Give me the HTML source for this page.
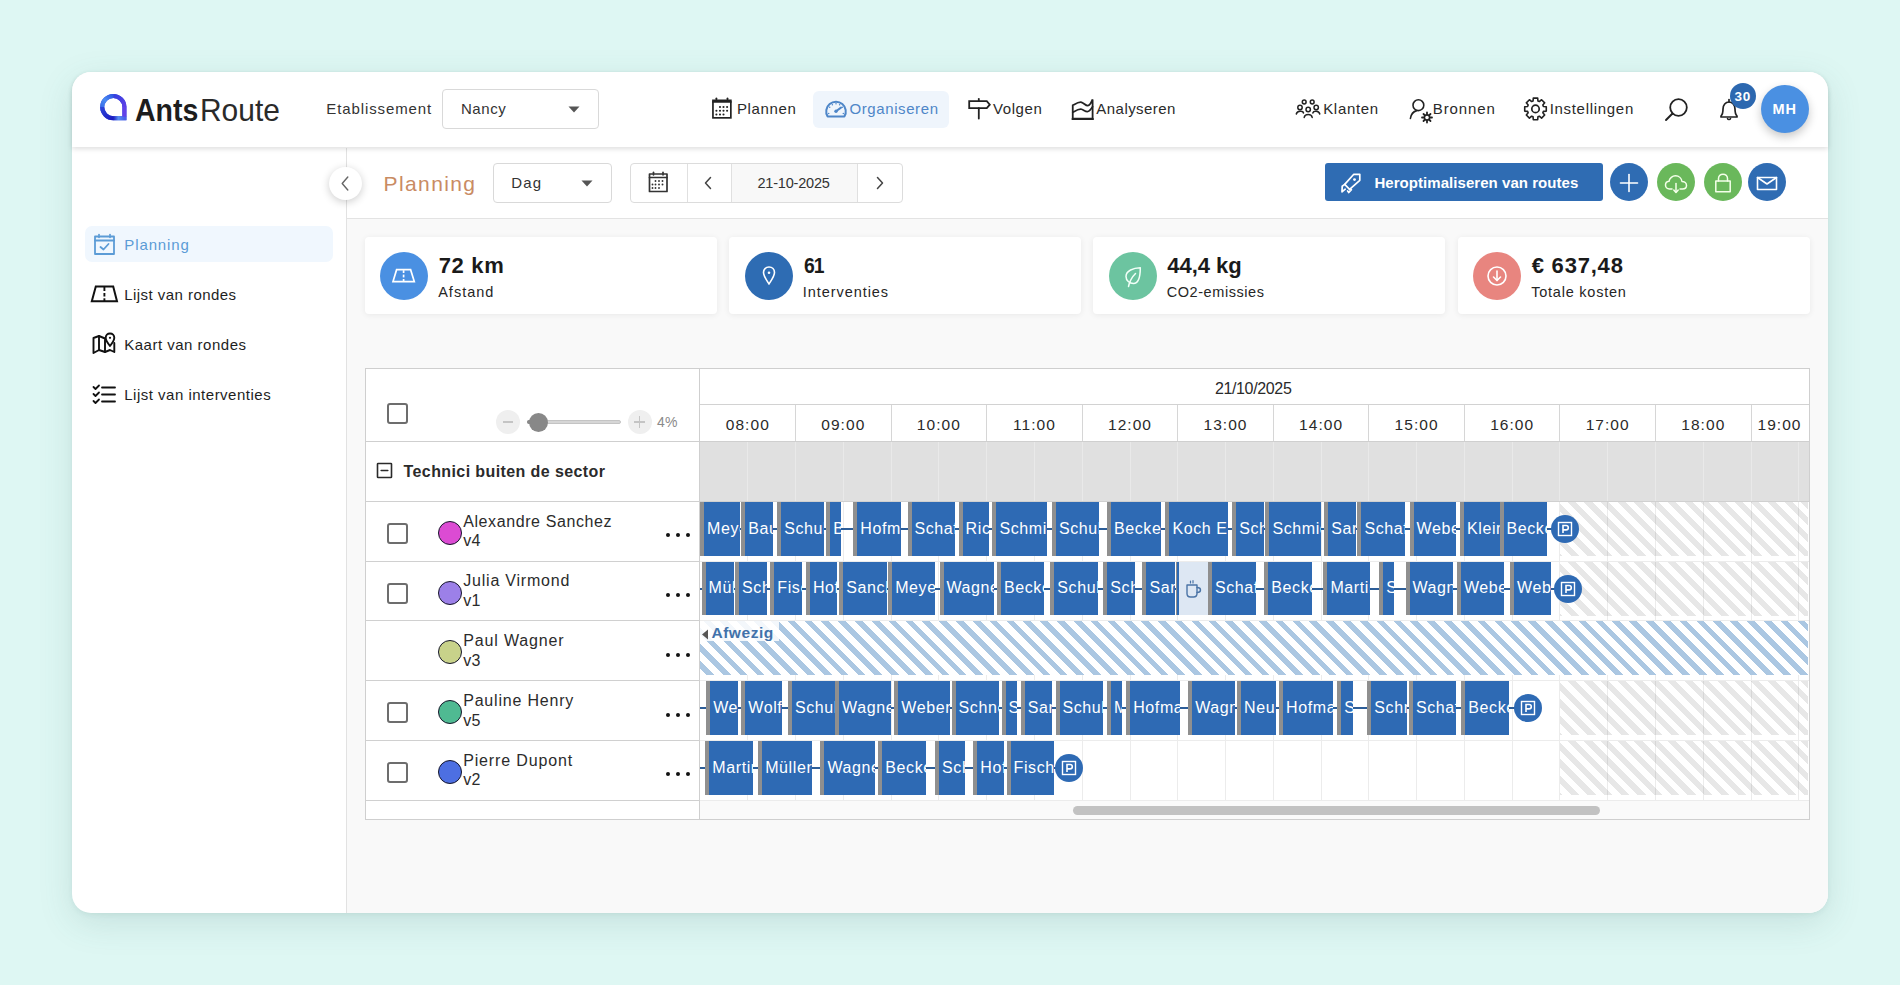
<!DOCTYPE html><html><head><meta charset="utf-8"><style>
html,body{margin:0;padding:0;}
body{width:1900px;height:985px;position:relative;overflow:hidden;background:#def7f3;font-family:"Liberation Sans",sans-serif;}
.t{position:absolute;white-space:pre;}
.b{position:absolute;box-sizing:border-box;}
</style></head><body>
<div class="b" style="left:72px;top:72px;width:1756px;height:841px;background:#fff;border-radius:19px;box-shadow:0 10px 34px rgba(60,110,105,0.15),0 2px 5px rgba(60,110,105,0.08);"></div>
<div class="b" style="left:347px;top:148px;width:1481px;height:765px;background:#f9f9f9;border-bottom-right-radius:19px;"></div>
<div class="b" style="left:346px;top:148px;width:1px;height:765px;background:#e2e2e2;"></div>
<div class="b" style="left:347px;top:148px;width:1481px;height:71px;background:#fff;border-bottom:1px solid #e3e3e3;"></div>
<div class="b" style="left:72px;top:72px;width:1756px;height:75px;background:#fff;border-radius:19px 19px 0 0;box-shadow:0 2px 5px rgba(0,0,0,0.13);"></div>
<svg class="b" style="left:97px;top:91px;" width="34" height="34" viewBox="0 0 34 34" fill="none" stroke-linecap="round" stroke-linejoin="round"><defs>
<linearGradient id="gA" gradientUnits="userSpaceOnUse" x1="16.3" y1="5" x2="27.4" y2="16.1"><stop offset="0" stop-color="#3540de"/><stop offset="1" stop-color="#5e40e6"/></linearGradient>
<linearGradient id="gB" gradientUnits="userSpaceOnUse" x1="16.3" y1="5" x2="5.2" y2="16.1"><stop offset="0" stop-color="#2f58e2"/><stop offset="0.55" stop-color="#4a8cf2"/><stop offset="1" stop-color="#3a70ea"/></linearGradient>
<linearGradient id="gC" gradientUnits="userSpaceOnUse" x1="5.2" y1="16.1" x2="16.3" y2="27.2"><stop offset="0" stop-color="#2c44d8"/><stop offset="1" stop-color="#1c1cc0"/></linearGradient>
<linearGradient id="gD" gradientUnits="userSpaceOnUse" x1="16.3" y1="27.2" x2="27.4" y2="27.2"><stop offset="0" stop-color="#1c1cc0"/><stop offset="0.45" stop-color="#5590f2"/><stop offset="1" stop-color="#4a62ea"/></linearGradient>
</defs>
<g stroke-width="4.1" stroke-linecap="butt" fill="none">
<path d="M27.4 16.1 A11.1 11.1 0 1 0 16.3 27.2 L27.4 27.2 Z" stroke="#3a50e2" stroke-linejoin="miter"/>
<path d="M27.4 16.1 A11.1 11.1 0 0 0 16.3 5" stroke="url(#gA)"/>
<path d="M16.3 5 A11.1 11.1 0 0 0 5.2 16.1" stroke="url(#gB)"/>
<path d="M5.2 16.1 A11.1 11.1 0 0 0 16.3 27.2" stroke="url(#gC)"/>
<path d="M16.1 27.2 L29.45 27.2" stroke="url(#gD)"/>
<path d="M27.4 25.6 L27.4 15.8" stroke="#6242e8"/>
</g></svg>
<div class="t" style="left:135.00px;top:91.19px;font-size:31.5px;line-height:39px;font-weight:700;color:#1d1d1d;letter-spacing:0px;transform:scaleX(0.905);transform-origin:0 0;">Ants</div>
<div class="t" style="left:199.50px;top:91.19px;font-size:31.5px;line-height:39px;font-weight:400;color:#2a2a2a;letter-spacing:0px;transform:scaleX(0.95);transform-origin:0 0;">Route</div>
<div class="t" style="left:326.25px;top:99.30px;font-size:15px;line-height:19px;font-weight:400;color:#333;letter-spacing:0.9px;">Etablissement</div>
<div class="b" style="left:442px;top:89px;width:157px;height:40px;border:1px solid #d9d9d9;border-radius:4px;background:#fff;"></div>
<div class="t" style="left:460.95px;top:99.30px;font-size:15px;line-height:19px;font-weight:400;color:#333;letter-spacing:0.6px;">Nancy</div>
<svg class="b" style="left:568px;top:106px;" width="12" height="7" viewBox="0 0 12 7" fill="none" stroke-linecap="round" stroke-linejoin="round"><path d="M0.5 0.5 L11.5 0.5 L6 6.5 Z" fill="#555" stroke="none"/></svg>
<svg class="b" style="left:711px;top:97px;" width="22" height="23" viewBox="0 0 22 23" fill="none" stroke-linecap="round" stroke-linejoin="round"><rect x="1.95" y="3.35" width="17.9" height="17.5" stroke="#222" stroke-width="1.7" stroke-linejoin="miter"/><line x1="1.95" y1="4.9" x2="19.85" y2="4.9" stroke="#222" stroke-width="1.7"/>
<line x1="5.4" y1="1.3" x2="5.4" y2="4" stroke="#222" stroke-width="1.7"/><line x1="16.5" y1="1.3" x2="16.5" y2="4" stroke="#222" stroke-width="1.7"/>
<g fill="#222" stroke="none"><circle cx="9" cy="10" r="1.05"/><circle cx="12.5" cy="10" r="1.05"/><circle cx="16.1" cy="10" r="1.05"/>
<circle cx="5.4" cy="13.7" r="1.05"/><circle cx="9" cy="13.7" r="1.05"/><circle cx="12.5" cy="13.7" r="1.05"/><circle cx="16.1" cy="13.7" r="1.05"/>
<circle cx="5.4" cy="17.5" r="1.05"/><circle cx="9" cy="17.5" r="1.05"/><circle cx="12.5" cy="17.5" r="1.05"/></g></svg>
<div class="t" style="left:736.95px;top:99.10px;font-size:15px;line-height:19px;font-weight:400;color:#2a2a2a;letter-spacing:0.65px;">Plannen</div>
<div class="b" style="left:812.5px;top:91px;width:136.0px;height:37px;background:#eff5fc;border-radius:6px;"></div>
<svg class="b" style="left:824px;top:99px;" width="24" height="20" viewBox="0 0 24 20" fill="none" stroke-linecap="round" stroke-linejoin="round"><path d="M3.6 17.6 A9.8 9.8 0 1 1 20.4 17.6 Z" stroke="#4e86c8" stroke-width="2" stroke-linejoin="round"/>
<line x1="12" y1="12.2" x2="17" y2="8.6" stroke="#4e86c8" stroke-width="2"/><circle cx="12" cy="12.2" r="1.7" fill="#4e86c8" stroke="none"/>
<g fill="#4e86c8" stroke="none"><circle cx="4.70" cy="14.50" r="0.75"/><circle cx="5.68" cy="8.35" r="0.75"/><circle cx="8.35" cy="5.68" r="0.75"/><circle cx="12.00" cy="4.70" r="0.75"/><circle cx="15.65" cy="5.68" r="0.75"/><circle cx="18.32" cy="8.35" r="0.75"/><circle cx="19.30" cy="14.50" r="0.75"/></g></svg>
<div class="t" style="left:849.45px;top:99.10px;font-size:15px;line-height:19px;font-weight:400;color:#4e86c8;letter-spacing:0.6px;">Organiseren</div>
<svg class="b" style="left:967px;top:97px;" width="25" height="23" viewBox="0 0 25 23" fill="none" stroke-linecap="round" stroke-linejoin="round"><path d="M2.2 4.2 L19.8 4.2 L22.8 7.7 L19.8 11.2 L2.2 11.2 Z" stroke="#222" stroke-width="1.8" stroke-linejoin="miter"/>
<line x1="11.8" y1="1.8" x2="11.8" y2="4.2" stroke="#222" stroke-width="1.8"/><line x1="11.8" y1="11.2" x2="11.8" y2="21.5" stroke="#222" stroke-width="1.8"/></svg>
<div class="t" style="left:992.95px;top:99.10px;font-size:15px;line-height:19px;font-weight:400;color:#2a2a2a;letter-spacing:0.6px;">Volgen</div>
<svg class="b" style="left:1071px;top:98px;" width="24" height="23" viewBox="0 0 24 23" fill="none" stroke-linecap="round" stroke-linejoin="round"><path d="M1.75 21.2 L1.75 7.3 C5 5.5 8 3.5 10.6 4.3 C13 5 14.5 7.8 16.9 7.6 C19 7.4 20.5 4 21.6 1.4 L21.6 21.2 Z" stroke="#222" stroke-width="1.8" stroke-linejoin="miter"/>
<path d="M1.75 14.3 C5 12.5 8 10.5 10.6 11.3 C13 12 14.5 14 16.9 13.5 C19 13 20.5 10.5 21.6 8.7" stroke="#222" stroke-width="1.7"/>
<line x1="1.75" y1="20.9" x2="21.6" y2="20.9" stroke="#222" stroke-width="2.4"/></svg>
<div class="t" style="left:1096.35px;top:99.10px;font-size:15px;line-height:19px;font-weight:400;color:#2a2a2a;letter-spacing:0.45px;">Analyseren</div>
<svg class="b" style="left:1295px;top:99px;" width="28" height="20" viewBox="0 0 28 20" fill="none" stroke-linecap="round" stroke-linejoin="round"><g stroke="#222" stroke-width="1.5">
<circle cx="9.2" cy="3" r="1.9"/><circle cx="17.2" cy="3" r="1.9"/>
<circle cx="5" cy="8.5" r="2.2"/><circle cx="13.2" cy="10.5" r="2.2"/><circle cx="21.2" cy="8.5" r="2.2"/>
<path d="M1.3 15 C2 11.5 8 11.5 8.5 14"/><path d="M17.8 14 C18.5 11.5 24 11.5 24.8 15"/>
<path d="M9.2 18.5 C9.8 14.5 16.6 14.5 17.2 18.5"/></g></svg>
<div class="t" style="left:1323.15px;top:99.10px;font-size:15px;line-height:19px;font-weight:400;color:#2a2a2a;letter-spacing:0.7px;">Klanten</div>
<svg class="b" style="left:1408px;top:98px;" width="27" height="27" viewBox="0 0 27 27" fill="none" stroke-linecap="round" stroke-linejoin="round"><g stroke="#222" stroke-width="1.6">
<circle cx="10.4" cy="7.2" r="5.4"/><path d="M2.4 20.5 C3 16.5 5 13.5 8.8 12.6"/>
<circle cx="19" cy="19.5" r="2.6"/></g>
<g stroke="#222" stroke-width="1.8">
<line x1="19" y1="14.5" x2="19" y2="16"/><line x1="19" y1="23" x2="19" y2="24.5"/>
<line x1="14" y1="19.5" x2="15.5" y2="19.5"/><line x1="22.5" y1="19.5" x2="24" y2="19.5"/>
<line x1="15.5" y1="16" x2="16.5" y2="17"/><line x1="21.5" y1="22" x2="22.5" y2="23"/>
<line x1="22.5" y1="16" x2="21.5" y2="17"/><line x1="16.5" y1="22" x2="15.5" y2="23"/></g></svg>
<div class="t" style="left:1432.75px;top:99.10px;font-size:15px;line-height:19px;font-weight:400;color:#2a2a2a;letter-spacing:0.9px;">Bronnen</div>
<svg class="b" style="left:1523px;top:96px;" width="26" height="26" viewBox="0 0 26 26" fill="none" stroke-linecap="round" stroke-linejoin="round"><path d="M10.05 4.97 L10.31 2.12 L14.69 2.12 L14.95 4.97 L16.37 5.56 L18.58 3.73 L21.67 6.82 L19.84 9.03 L20.43 10.45 L23.28 10.71 L23.28 15.09 L20.43 15.35 L19.84 16.77 L21.67 18.98 L18.58 22.07 L16.37 20.24 L14.95 20.83 L14.69 23.68 L10.31 23.68 L10.05 20.83 L8.63 20.24 L6.42 22.07 L3.33 18.98 L5.16 16.77 L4.57 15.35 L1.72 15.09 L1.72 10.71 L4.57 10.45 L5.16 9.03 L3.33 6.82 L6.42 3.73 L8.63 5.56 Z" stroke="#222" stroke-width="1.6" stroke-linejoin="round"/><circle cx="12.5" cy="12.9" r="3.7" stroke="#222" stroke-width="1.7"/></svg>
<div class="t" style="left:1549.65px;top:99.10px;font-size:15px;line-height:19px;font-weight:400;color:#2a2a2a;letter-spacing:0.7px;">Instellingen</div>
<svg class="b" style="left:1664px;top:97px;" width="26" height="26" viewBox="0 0 26 26" fill="none" stroke-linecap="round" stroke-linejoin="round"><circle cx="14.5" cy="10.5" r="8.3" stroke="#222" stroke-width="1.8"/><line x1="8.5" y1="16.5" x2="2" y2="23" stroke="#222" stroke-width="1.9"/></svg>
<svg class="b" style="left:1718px;top:97px;" width="22" height="26" viewBox="0 0 22 26" fill="none" stroke-linecap="round" stroke-linejoin="round"><path d="M3 20 L3 19 C4.5 17.5 5 15 5 12 C5 8 7.5 5 11 5 C14.5 5 17 8 17 12 C17 15 17.5 17.5 19 19 L19 20 Z" stroke="#222" stroke-width="1.7"/>
<line x1="11" y1="2.5" x2="11" y2="5" stroke="#222" stroke-width="1.7"/><path d="M9.5 21.5 A1.6 1.6 0 0 0 12.5 21.5" stroke="#222" stroke-width="1.6"/></svg>
<div class="b" style="left:1730px;top:83px;width:26px;height:26px;background:#2c68b0;border-radius:50%;"></div>
<div class="t" style="left:1734.56px;top:87.82px;font-size:13.5px;line-height:17px;font-weight:700;color:#fff;letter-spacing:0.6px;">30</div>
<div class="b" style="left:1761px;top:85px;width:48px;height:48px;background:#4a90e2;border-radius:50%;box-shadow:0 4px 10px rgba(0,0,0,0.22);"></div>
<div class="t" style="left:1772.48px;top:100.48px;font-size:14.5px;line-height:18px;font-weight:700;color:#fff;letter-spacing:1.0px;">MH</div>
<div class="b" style="left:329px;top:167px;width:33px;height:33px;background:#fff;border-radius:50%;box-shadow:0 2px 9px rgba(0,0,0,0.20);"></div>
<svg class="b" style="left:339px;top:175px;" width="12" height="17" viewBox="0 0 12 17" fill="none" stroke-linecap="round" stroke-linejoin="round"><path d="M8.8 2 L3.2 8.5 L8.8 15" stroke="#666" stroke-width="1.4"/></svg>
<div class="t" style="left:383.53px;top:170.62px;font-size:21px;line-height:26px;font-weight:400;color:#c98b63;letter-spacing:1.4px;">Planning</div>
<div class="b" style="left:493px;top:163px;width:119px;height:40px;border:1px solid #d9d9d9;border-radius:4px;background:#fff;"></div>
<div class="t" style="left:511.25px;top:172.90px;font-size:15px;line-height:19px;font-weight:400;color:#333;letter-spacing:1.2px;">Dag</div>
<svg class="b" style="left:581px;top:180px;" width="12" height="7" viewBox="0 0 12 7" fill="none" stroke-linecap="round" stroke-linejoin="round"><path d="M0.5 0.5 L11.5 0.5 L6 6.5 Z" fill="#555" stroke="none"/></svg>
<div class="b" style="left:630px;top:163px;width:273px;height:40px;border:1px solid #dcdcdc;border-radius:4px;background:#fff;"></div>
<div class="b" style="left:732px;top:164px;width:126px;height:38px;background:#f8f8f8;"></div>
<div class="b" style="left:687px;top:164px;width:1px;height:38px;background:#e0e0e0;"></div>
<div class="b" style="left:731px;top:164px;width:1px;height:38px;background:#e0e0e0;"></div>
<div class="b" style="left:857px;top:164px;width:1px;height:38px;background:#e0e0e0;"></div>
<svg class="b" style="left:648px;top:171px;" width="21" height="22" viewBox="0 0 21 22" fill="none" stroke-linecap="round" stroke-linejoin="round"><rect x="1.5" y="3" width="17.5" height="17.5" stroke="#333" stroke-width="1.7"/><line x1="1.5" y1="6.5" x2="19" y2="6.5" stroke="#333" stroke-width="1.7"/>
<line x1="5.5" y1="1.2" x2="5.5" y2="4" stroke="#333" stroke-width="1.6"/><line x1="15" y1="1.2" x2="15" y2="4" stroke="#333" stroke-width="1.6"/>
<g fill="#333" stroke="none"><circle cx="7.5" cy="10" r="0.95"/><circle cx="11" cy="10" r="0.95"/><circle cx="14.5" cy="10" r="0.95"/>
<circle cx="4.5" cy="13.5" r="0.95"/><circle cx="7.5" cy="13.5" r="0.95"/><circle cx="11" cy="13.5" r="0.95"/><circle cx="14.5" cy="13.5" r="0.95"/>
<circle cx="4.5" cy="17" r="0.95"/><circle cx="7.5" cy="17" r="0.95"/><circle cx="11" cy="17" r="0.95"/></g></svg>
<svg class="b" style="left:703px;top:176px;" width="10" height="14" viewBox="0 0 10 14" fill="none" stroke-linecap="round" stroke-linejoin="round"><path d="M7.5 1.5 L2.5 7 L7.5 12.5" stroke="#444" stroke-width="1.5"/></svg>
<div class="t" style="left:757.49px;top:173.88px;font-size:14.5px;line-height:18px;font-weight:400;color:#333;letter-spacing:-0.2px;">21-10-2025</div>
<svg class="b" style="left:875px;top:176px;" width="10" height="14" viewBox="0 0 10 14" fill="none" stroke-linecap="round" stroke-linejoin="round"><path d="M2.5 1.5 L7.5 7 L2.5 12.5" stroke="#444" stroke-width="1.5"/></svg>
<div class="b" style="left:1325px;top:163px;width:278px;height:38px;background:#2f6cb3;border-radius:3px;"></div>
<svg class="b" style="left:1339px;top:172px;" width="23" height="23" viewBox="0 0 23 23" fill="none" stroke-linecap="round" stroke-linejoin="round"><g stroke="#fff" stroke-width="1.7" stroke-linejoin="round">
<path d="M20.8 2.3 L20.8 8.3 L10.6 17.3 L5.7 12.4 L14.8 2.3 Z"/>
<path d="M5.7 12.4 L3.2 14.2 L3 19.8 L6.2 17.2"/><path d="M10.6 17.3 L12.4 17.6 L9.8 20.5 L8.6 19"/></g>
<circle cx="15.5" cy="7.6" r="1.4" fill="#fff" stroke="none"/></svg>
<div class="t" style="left:1374.45px;top:172.70px;font-size:15px;line-height:19px;font-weight:700;color:#fff;letter-spacing:0.05px;">Heroptimaliseren van routes</div>
<div class="b" style="left:1610px;top:163px;width:38px;height:38px;background:#2f6cb3;border-radius:50%;"></div>
<svg class="b" style="left:1619px;top:172.7px;" width="20" height="20" viewBox="0 0 20 20" fill="none" stroke-linecap="round" stroke-linejoin="round"><line x1="10" y1="1.5" x2="10" y2="18.5" stroke="#fff" stroke-width="1.6"/><line x1="1.5" y1="10" x2="18.5" y2="10" stroke="#fff" stroke-width="1.6"/></svg>
<div class="b" style="left:1657px;top:163px;width:38px;height:38px;background:#6ab85b;border-radius:50%;"></div>
<svg class="b" style="left:1664px;top:174px;" width="24" height="20" viewBox="0 0 24 20" fill="none" stroke-linecap="round" stroke-linejoin="round"><path d="M8 15 L5.5 15 C3 15 1.5 13 1.5 11 C1.5 9 3 7.5 5 7.3 C5.5 4 8.5 1.8 11.5 1.8 C15 1.8 17.5 4.5 18 7.5 C20.5 7.5 22.5 9.3 22.5 11.5 C22.5 13.5 21 15 18.5 15 L16 15" stroke="#f4ffe9" stroke-width="1.5"/>
<line x1="12" y1="9.5" x2="12" y2="18" stroke="#f4ffe9" stroke-width="1.5"/><path d="M9.8 16 L12 18.5 L14.2 16" stroke="#f4ffe9" stroke-width="1.5"/></svg>
<div class="b" style="left:1704px;top:163px;width:38px;height:38px;background:#6ab85b;border-radius:50%;"></div>
<svg class="b" style="left:1714px;top:172.5px;" width="18" height="20" viewBox="0 0 18 20" fill="none" stroke-linecap="round" stroke-linejoin="round"><rect x="1.8" y="8" width="14.4" height="10.8" stroke="#f4ffe9" stroke-width="1.5"/><path d="M4.5 8 L4.5 5.5 C4.5 3 6.5 1.2 9 1.2 C11.5 1.2 13.5 3 13.5 5.5 L13.5 8" stroke="#f4ffe9" stroke-width="1.5"/></svg>
<div class="b" style="left:1748px;top:163px;width:38px;height:38px;background:#2f6cb3;border-radius:50%;"></div>
<svg class="b" style="left:1756px;top:175.8px;" width="22" height="15" viewBox="0 0 22 15" fill="none" stroke-linecap="round" stroke-linejoin="round"><rect x="1.5" y="1.5" width="19" height="12" stroke="#fff" stroke-width="1.6"/><path d="M1.5 1.5 L11 8 L20.5 1.5" stroke="#fff" stroke-width="1.6"/></svg>
<div class="b" style="left:85px;top:226px;width:248px;height:36px;background:#f0f7fe;border-radius:7px;"></div>
<svg class="b" style="left:93px;top:233px;" width="23" height="23" viewBox="0 0 23 23" fill="none" stroke-linecap="round" stroke-linejoin="round"><rect x="2" y="3.5" width="19" height="17.5" stroke="#5b9bd6" stroke-width="1.8"/><line x1="2" y1="7.5" x2="21" y2="7.5" stroke="#5b9bd6" stroke-width="1.8"/>
<line x1="6" y1="1.5" x2="6" y2="4.5" stroke="#5b9bd6" stroke-width="1.6"/><line x1="17" y1="1.5" x2="17" y2="4.5" stroke="#5b9bd6" stroke-width="1.6"/>
<path d="M7.5 14 L10.5 16.5 L15.5 11" stroke="#5b9bd6" stroke-width="1.8"/></svg>
<div class="t" style="left:124.25px;top:234.80px;font-size:15px;line-height:19px;font-weight:400;color:#5b9bd6;letter-spacing:0.9px;">Planning</div>
<svg class="b" style="left:89.5px;top:285px;" width="29" height="19" viewBox="0 0 29 19" fill="none" stroke-linecap="round" stroke-linejoin="round"><path d="M5.8 1.5 L23.2 1.5 L27 16.2 L1.8 16.2 Z" stroke="#111" stroke-width="2" stroke-linejoin="miter"/><g stroke="#111" stroke-width="1.9" stroke-linecap="butt"><line x1="14.4" y1="2" x2="14.4" y2="6"/><line x1="14.4" y1="8" x2="14.4" y2="11.5"/><line x1="14.4" y1="13.3" x2="14.4" y2="16"/></g></svg>
<div class="t" style="left:124.25px;top:284.50px;font-size:15px;line-height:19px;font-weight:400;color:#1e1e1e;letter-spacing:0.45px;">Lijst van rondes</div>
<svg class="b" style="left:91px;top:331px;" width="26" height="25" viewBox="0 0 26 25" fill="none" stroke-linecap="round" stroke-linejoin="round"><path d="M2.5 7 L8 5 L14 7.5 L14 21 L8 19 L2.5 22 Z" stroke="#111" stroke-width="1.9"/><line x1="8" y1="5" x2="8" y2="19" stroke="#111" stroke-width="1.9"/>
<path d="M19 2.5 C21.5 2.5 23.3 4.3 23.3 6.8 C23.3 9.5 21 12.5 19 15 C17 12.5 14.7 9.5 14.7 6.8 C14.7 4.3 16.5 2.5 19 2.5 Z" stroke="#111" stroke-width="1.9"/>
<circle cx="19" cy="6.8" r="1.1" fill="#111" stroke="none"/><path d="M14 21 L19 19 L23.3 21 L23.3 12" stroke="#111" stroke-width="1.9"/></svg>
<div class="t" style="left:124.25px;top:334.70px;font-size:15px;line-height:19px;font-weight:400;color:#1e1e1e;letter-spacing:0.5px;">Kaart van rondes</div>
<svg class="b" style="left:92px;top:384px;" width="25" height="21" viewBox="0 0 25 21" fill="none" stroke-linecap="round" stroke-linejoin="round"><g stroke="#111" stroke-width="1.8">
<path d="M1.5 3 L3.5 5 L7 1.5"/><path d="M1.5 10 L3.5 12 L7 8.5"/><path d="M1.5 17 L3.5 19 L7 15.5"/>
<line x1="10" y1="3.5" x2="23" y2="3.5"/><line x1="10" y1="10.5" x2="23" y2="10.5"/><line x1="10" y1="17.5" x2="23" y2="17.5"/></g></svg>
<div class="t" style="left:124.25px;top:385.00px;font-size:15px;line-height:19px;font-weight:400;color:#1e1e1e;letter-spacing:0.5px;">Lijst van interventies</div>
<div class="b" style="left:364.5px;top:236.5px;width:352.0px;height:77.5px;background:#fff;border-radius:4px;box-shadow:0 1px 6px rgba(0,0,0,0.07);"></div>
<div class="b" style="left:380.0px;top:252px;width:48.0px;height:48px;background:#4a90e2;border-radius:50%;"></div>
<svg class="b" style="left:390.0px;top:264px;" width="28" height="24" viewBox="0 0 28 24" fill="none" stroke-linecap="round" stroke-linejoin="round"><path d="M6.6 5.65 L20.6 5.65 L24.3 17.55 L3 17.55 Z" stroke="#fff" stroke-width="1.7" stroke-linejoin="miter"/><g stroke="#fff" stroke-width="1.7" stroke-linecap="butt"><line x1="13.6" y1="6.2" x2="13.6" y2="9"/><line x1="13.6" y1="10.6" x2="13.6" y2="13.4"/><line x1="13.6" y1="15" x2="13.6" y2="17.3"/></g></svg>
<div class="t" style="left:438.66px;top:251.98px;font-size:22px;line-height:28px;font-weight:700;color:#1a1a1a;letter-spacing:0.7px;">72 km</div>
<div class="t" style="left:438.19px;top:282.58px;font-size:14.5px;line-height:18px;font-weight:400;color:#262626;letter-spacing:1.0px;">Afstand</div>
<div class="b" style="left:729px;top:236.5px;width:352px;height:77.5px;background:#fff;border-radius:4px;box-shadow:0 1px 6px rgba(0,0,0,0.07);"></div>
<div class="b" style="left:744.5px;top:252px;width:48.0px;height:48px;background:#2e6cb3;border-radius:50%;"></div>
<svg class="b" style="left:756.5px;top:264px;" width="24" height="24" viewBox="0 0 24 24" fill="none" stroke-linecap="round" stroke-linejoin="round"><path d="M12 3 C15.3 3 17.5 5.4 17.5 8.5 C17.5 12 14.5 16 12 20 C9.5 16 6.5 12 6.5 8.5 C6.5 5.4 8.7 3 12 3 Z" stroke="#fff" stroke-width="1.6"/><circle cx="12" cy="8.8" r="1.3" fill="#fff" stroke="none"/></svg>
<div class="t" style="left:804.00px;top:251.98px;font-size:22px;line-height:28px;font-weight:700;color:#1a1a1a;letter-spacing:-1.2px;transform:scaleX(0.88);transform-origin:0 0;">61</div>
<div class="t" style="left:802.69px;top:282.58px;font-size:14.5px;line-height:18px;font-weight:400;color:#262626;letter-spacing:0.95px;">Interventies</div>
<div class="b" style="left:1093px;top:236.5px;width:352px;height:77.5px;background:#fff;border-radius:4px;box-shadow:0 1px 6px rgba(0,0,0,0.07);"></div>
<div class="b" style="left:1108.5px;top:252px;width:48.0px;height:48px;background:#6cc4a0;border-radius:50%;"></div>
<svg class="b" style="left:1120.5px;top:264px;" width="24" height="24" viewBox="0 0 24 24" fill="none" stroke-linecap="round" stroke-linejoin="round"><path d="M19.3 3.8 C12.5 4 5 6.5 5 12.5 C5 16.5 8.5 19.5 12.5 19.5 C17 19.5 19.3 15 19.3 3.8 Z" stroke="#f2fff8" stroke-width="1.5"/><path d="M7.5 22.5 C8.5 17.5 10.5 13.5 14.5 9.5" stroke="#f2fff8" stroke-width="1.5"/></svg>
<div class="t" style="left:1167.16px;top:251.98px;font-size:22px;line-height:28px;font-weight:700;color:#1a1a1a;letter-spacing:0.0px;">44,4 kg</div>
<div class="t" style="left:1166.68px;top:282.58px;font-size:14.5px;line-height:18px;font-weight:400;color:#262626;letter-spacing:0.57px;">CO2-emissies</div>
<div class="b" style="left:1457.5px;top:236.5px;width:352.0px;height:77.5px;background:#fff;border-radius:4px;box-shadow:0 1px 6px rgba(0,0,0,0.07);"></div>
<div class="b" style="left:1473.0px;top:252px;width:48.0px;height:48px;background:#e8857f;border-radius:50%;"></div>
<svg class="b" style="left:1485.0px;top:264px;" width="24" height="24" viewBox="0 0 24 24" fill="none" stroke-linecap="round" stroke-linejoin="round"><circle cx="12" cy="12" r="9" stroke="#fff" stroke-width="1.6"/><line x1="12" y1="7" x2="12" y2="16.5" stroke="#fff" stroke-width="1.6"/><path d="M8.5 13 L12 16.5 L15.5 13" stroke="#fff" stroke-width="1.6"/></svg>
<div class="t" style="left:1531.66px;top:251.98px;font-size:22px;line-height:28px;font-weight:700;color:#1a1a1a;letter-spacing:0.8px;">€ 637,48</div>
<div class="t" style="left:1531.18px;top:282.58px;font-size:14.5px;line-height:18px;font-weight:400;color:#262626;letter-spacing:0.77px;">Totale kosten</div>
<div class="b" style="left:365px;top:368px;width:1445px;height:452px;background:#fff;border:1px solid #cfcfcf;"></div>
<div class="b" style="left:700px;top:801px;width:1109px;height:18px;background:#fafafa;"></div>
<div class="b" style="left:1073px;top:805.5px;width:527px;height:9.5px;background:#c2c2c2;border-radius:5px;"></div>
<div class="b" style="left:699px;top:369px;width:1px;height:450px;background:#cfcfcf;"></div>
<div class="b" style="left:700px;top:404px;width:1109px;height:1px;background:#d2d2d2;"></div>
<div class="b" style="left:365px;top:441px;width:1444px;height:1px;background:#cfcfcf;"></div>
<div class="b" style="left:795.0px;top:405px;width:1.0px;height:36px;background:#d6d6d6;"></div>
<div class="b" style="left:890.6px;top:405px;width:1.0px;height:36px;background:#d6d6d6;"></div>
<div class="b" style="left:986.1px;top:405px;width:1.0px;height:36px;background:#d6d6d6;"></div>
<div class="b" style="left:1081.7px;top:405px;width:1.0px;height:36px;background:#d6d6d6;"></div>
<div class="b" style="left:1177.2px;top:405px;width:1.0px;height:36px;background:#d6d6d6;"></div>
<div class="b" style="left:1272.8px;top:405px;width:1.0px;height:36px;background:#d6d6d6;"></div>
<div class="b" style="left:1368.3px;top:405px;width:1.0px;height:36px;background:#d6d6d6;"></div>
<div class="b" style="left:1463.9px;top:405px;width:1.0px;height:36px;background:#d6d6d6;"></div>
<div class="b" style="left:1559.4px;top:405px;width:1.0px;height:36px;background:#d6d6d6;"></div>
<div class="b" style="left:1655.0px;top:405px;width:1.0px;height:36px;background:#d6d6d6;"></div>
<div class="b" style="left:1750.5px;top:405px;width:1.0px;height:36px;background:#d6d6d6;"></div>
<div class="t" style="left:1214.88px;top:378.96px;font-size:16px;line-height:20px;font-weight:400;color:#2a2a2a;letter-spacing:-0.35px;">21/10/2025</div>
<div class="t" style="left:707.8px;width:80px;text-align:center;top:415.0px;line-height:20px;font-size:15.5px;color:#2a2a2a;letter-spacing:1.05px">08:00</div>
<div class="t" style="left:803.3px;width:80px;text-align:center;top:415.0px;line-height:20px;font-size:15.5px;color:#2a2a2a;letter-spacing:1.05px">09:00</div>
<div class="t" style="left:898.9px;width:80px;text-align:center;top:415.0px;line-height:20px;font-size:15.5px;color:#2a2a2a;letter-spacing:1.05px">10:00</div>
<div class="t" style="left:994.4px;width:80px;text-align:center;top:415.0px;line-height:20px;font-size:15.5px;color:#2a2a2a;letter-spacing:1.05px">11:00</div>
<div class="t" style="left:1090.0px;width:80px;text-align:center;top:415.0px;line-height:20px;font-size:15.5px;color:#2a2a2a;letter-spacing:1.05px">12:00</div>
<div class="t" style="left:1185.5px;width:80px;text-align:center;top:415.0px;line-height:20px;font-size:15.5px;color:#2a2a2a;letter-spacing:1.05px">13:00</div>
<div class="t" style="left:1281.1px;width:80px;text-align:center;top:415.0px;line-height:20px;font-size:15.5px;color:#2a2a2a;letter-spacing:1.05px">14:00</div>
<div class="t" style="left:1376.6px;width:80px;text-align:center;top:415.0px;line-height:20px;font-size:15.5px;color:#2a2a2a;letter-spacing:1.05px">15:00</div>
<div class="t" style="left:1472.2px;width:80px;text-align:center;top:415.0px;line-height:20px;font-size:15.5px;color:#2a2a2a;letter-spacing:1.05px">16:00</div>
<div class="t" style="left:1567.7px;width:80px;text-align:center;top:415.0px;line-height:20px;font-size:15.5px;color:#2a2a2a;letter-spacing:1.05px">17:00</div>
<div class="t" style="left:1663.3px;width:80px;text-align:center;top:415.0px;line-height:20px;font-size:15.5px;color:#2a2a2a;letter-spacing:1.05px">18:00</div>
<div class="t" style="left:1739.5px;width:80px;text-align:center;top:415.0px;line-height:20px;font-size:15.5px;color:#2a2a2a;letter-spacing:1.05px">19:00</div>
<div class="b" style="left:386.5px;top:403px;width:21.0px;height:21px;border:2.5px solid #6d6d6d;border-radius:3px;background:#fff;"></div>
<div class="b" style="left:496px;top:409.5px;width:24px;height:24.0px;background:#efefef;border-radius:50%;"></div>
<div class="b" style="left:503px;top:420.8px;width:10px;height:2.0px;background:#c4c4c4;"></div>
<div class="b" style="left:527px;top:419.7px;width:94px;height:4.5px;background:#d6d6d6;border:1px solid #c4c4c4;border-radius:3px;"></div>
<div class="b" style="left:527px;top:419.7px;width:10px;height:4.5px;background:#888;border-radius:3px;"></div>
<div class="b" style="left:529px;top:412.5px;width:19px;height:19.0px;background:#888;border-radius:50%;"></div>
<div class="b" style="left:627.5px;top:409.5px;width:24.0px;height:24.0px;background:#efefef;border-radius:50%;"></div>
<div class="b" style="left:634px;top:420.8px;width:11px;height:1.8000000000000114px;background:#c4c4c4;"></div>
<div class="b" style="left:638.6px;top:416px;width:1.7999999999999545px;height:11.5px;background:#c4c4c4;"></div>
<div class="t" style="left:657.02px;top:413.05px;font-size:14px;line-height:18px;font-weight:400;color:#8a8a8a;letter-spacing:0.3px;">4%</div>
<div class="b" style="left:700px;top:442px;width:1109px;height:59px;background:#e0e0e0;"></div>
<div class="b" style="left:365px;top:501px;width:1444px;height:1px;background:#d0d0d0;"></div>
<svg class="b" style="left:376px;top:462px;" width="17" height="17" viewBox="0 0 17 17" fill="none" stroke-linecap="round" stroke-linejoin="round"><rect x="1.5" y="1.5" width="14" height="14" rx="0.6" stroke="#2a2a2a" stroke-width="1.6" stroke-linejoin="miter"/><line x1="5.2" y1="8.5" x2="11.8" y2="8.5" stroke="#2a2a2a" stroke-width="1.6"/></svg>
<div class="t" style="left:403.58px;top:461.66px;font-size:16px;line-height:20px;font-weight:700;color:#2b2b2b;letter-spacing:0.4px;">Technici buiten de sector</div>
<div class="b" style="left:365px;top:560.55px;width:335px;height:1.0px;background:#d0d0d0;"></div>
<div class="b" style="left:386.5px;top:522.8px;width:21.0px;height:21.0px;border:2.5px solid #6d6d6d;border-radius:3px;background:#fff;"></div>
<div class="b" style="left:437.5px;top:520.8px;width:24.0px;height:24.0px;background:#dc4bd3;border:1.9px solid #16162a;border-radius:50%;"></div>
<div class="t" style="left:463.18px;top:511.56px;font-size:16px;line-height:20px;font-weight:400;color:#2b2b2b;letter-spacing:0.6px;">Alexandre Sanchez</div>
<div class="t" style="left:463.18px;top:531.26px;font-size:16px;line-height:20px;font-weight:400;color:#2b2b2b;letter-spacing:0.3px;">v4</div>
<div class="b" style="left:665.5px;top:533.3px;width:4.0px;height:4.0px;background:#111;border-radius:50%;"></div>
<div class="b" style="left:675.7px;top:533.3px;width:4.0px;height:4.0px;background:#111;border-radius:50%;"></div>
<div class="b" style="left:685.9px;top:533.3px;width:4.0px;height:4.0px;background:#111;border-radius:50%;"></div>
<div class="b" style="left:365px;top:620.3px;width:335px;height:1.0px;background:#d0d0d0;"></div>
<div class="b" style="left:386.5px;top:582.55px;width:21.0px;height:21.0px;border:2.5px solid #6d6d6d;border-radius:3px;background:#fff;"></div>
<div class="b" style="left:437.5px;top:580.55px;width:24.0px;height:24.0px;background:#9c80e8;border:1.9px solid #16162a;border-radius:50%;"></div>
<div class="t" style="left:463.18px;top:571.31px;font-size:16px;line-height:20px;font-weight:400;color:#2b2b2b;letter-spacing:0.8px;">Julia Virmond</div>
<div class="t" style="left:463.18px;top:591.01px;font-size:16px;line-height:20px;font-weight:400;color:#2b2b2b;letter-spacing:0.3px;">v1</div>
<div class="b" style="left:665.5px;top:593.05px;width:4.0px;height:4.0px;background:#111;border-radius:50%;"></div>
<div class="b" style="left:675.7px;top:593.05px;width:4.0px;height:4.0px;background:#111;border-radius:50%;"></div>
<div class="b" style="left:685.9px;top:593.05px;width:4.0px;height:4.0px;background:#111;border-radius:50%;"></div>
<div class="b" style="left:365px;top:680.05px;width:335px;height:1.0px;background:#d0d0d0;"></div>
<div class="b" style="left:437.5px;top:640.3px;width:24.0px;height:24.0px;background:#c8d28a;border:1.9px solid #16162a;border-radius:50%;"></div>
<div class="t" style="left:463.18px;top:631.06px;font-size:16px;line-height:20px;font-weight:400;color:#2b2b2b;letter-spacing:0.85px;">Paul Wagner</div>
<div class="t" style="left:463.18px;top:650.76px;font-size:16px;line-height:20px;font-weight:400;color:#2b2b2b;letter-spacing:0.3px;">v3</div>
<div class="b" style="left:665.5px;top:652.8px;width:4.0px;height:4.0px;background:#111;border-radius:50%;"></div>
<div class="b" style="left:675.7px;top:652.8px;width:4.0px;height:4.0px;background:#111;border-radius:50%;"></div>
<div class="b" style="left:685.9px;top:652.8px;width:4.0px;height:4.0px;background:#111;border-radius:50%;"></div>
<div class="b" style="left:365px;top:739.8px;width:335px;height:1.0px;background:#d0d0d0;"></div>
<div class="b" style="left:386.5px;top:702.05px;width:21.0px;height:21.0px;border:2.5px solid #6d6d6d;border-radius:3px;background:#fff;"></div>
<div class="b" style="left:437.5px;top:700.05px;width:24.0px;height:24.0px;background:#4fba92;border:1.9px solid #16162a;border-radius:50%;"></div>
<div class="t" style="left:463.18px;top:690.81px;font-size:16px;line-height:20px;font-weight:400;color:#2b2b2b;letter-spacing:0.8px;">Pauline Henry</div>
<div class="t" style="left:463.18px;top:710.51px;font-size:16px;line-height:20px;font-weight:400;color:#2b2b2b;letter-spacing:0.3px;">v5</div>
<div class="b" style="left:665.5px;top:712.55px;width:4.0px;height:4.0px;background:#111;border-radius:50%;"></div>
<div class="b" style="left:675.7px;top:712.55px;width:4.0px;height:4.0px;background:#111;border-radius:50%;"></div>
<div class="b" style="left:685.9px;top:712.55px;width:4.0px;height:4.0px;background:#111;border-radius:50%;"></div>
<div class="b" style="left:365px;top:799.55px;width:335px;height:1.0px;background:#d0d0d0;"></div>
<div class="b" style="left:386.5px;top:761.8px;width:21.0px;height:21.0px;border:2.5px solid #6d6d6d;border-radius:3px;background:#fff;"></div>
<div class="b" style="left:437.5px;top:759.8px;width:24.0px;height:24.0px;background:#4d6fe2;border:1.9px solid #16162a;border-radius:50%;"></div>
<div class="t" style="left:463.18px;top:750.56px;font-size:16px;line-height:20px;font-weight:400;color:#2b2b2b;letter-spacing:0.85px;">Pierre Dupont</div>
<div class="t" style="left:463.18px;top:770.26px;font-size:16px;line-height:20px;font-weight:400;color:#2b2b2b;letter-spacing:0.3px;">v2</div>
<div class="b" style="left:665.5px;top:772.3px;width:4.0px;height:4.0px;background:#111;border-radius:50%;"></div>
<div class="b" style="left:675.7px;top:772.3px;width:4.0px;height:4.0px;background:#111;border-radius:50%;"></div>
<div class="b" style="left:685.9px;top:772.3px;width:4.0px;height:4.0px;background:#111;border-radius:50%;"></div>
<div class="b" style="left:700px;top:560.55px;width:1109px;height:1.0px;background:#ececec;"></div>
<div class="b" style="left:700px;top:620.3px;width:1109px;height:1.0px;background:#ececec;"></div>
<div class="b" style="left:700px;top:680.05px;width:1109px;height:1.0px;background:#ececec;"></div>
<div class="b" style="left:700px;top:739.8px;width:1109px;height:1.0px;background:#ececec;"></div>
<div class="b" style="left:700px;top:799.55px;width:1109px;height:1.0px;background:#ececec;"></div>
<div class="b" style="left:747.3px;top:502px;width:1.0px;height:299px;background:#ececec;"></div>
<div class="b" style="left:795.0px;top:502px;width:1.0px;height:299px;background:#ececec;"></div>
<div class="b" style="left:842.8px;top:502px;width:1.0px;height:299px;background:#ececec;"></div>
<div class="b" style="left:890.6px;top:502px;width:1.0px;height:299px;background:#ececec;"></div>
<div class="b" style="left:938.4px;top:502px;width:1.0px;height:299px;background:#ececec;"></div>
<div class="b" style="left:986.1px;top:502px;width:1.0px;height:299px;background:#ececec;"></div>
<div class="b" style="left:1033.9px;top:502px;width:1.0px;height:299px;background:#ececec;"></div>
<div class="b" style="left:1081.7px;top:502px;width:1.0px;height:299px;background:#ececec;"></div>
<div class="b" style="left:1129.5px;top:502px;width:1.0px;height:299px;background:#ececec;"></div>
<div class="b" style="left:1177.2px;top:502px;width:1.0px;height:299px;background:#ececec;"></div>
<div class="b" style="left:1225.0px;top:502px;width:1.0px;height:299px;background:#ececec;"></div>
<div class="b" style="left:1272.8px;top:502px;width:1.0px;height:299px;background:#ececec;"></div>
<div class="b" style="left:1320.6px;top:502px;width:1.0px;height:299px;background:#ececec;"></div>
<div class="b" style="left:1368.3px;top:502px;width:1.0px;height:299px;background:#ececec;"></div>
<div class="b" style="left:1416.1px;top:502px;width:1.0px;height:299px;background:#ececec;"></div>
<div class="b" style="left:1463.9px;top:502px;width:1.0px;height:299px;background:#ececec;"></div>
<div class="b" style="left:1511.7px;top:502px;width:1.0px;height:299px;background:#ececec;"></div>
<div class="b" style="left:1559.4px;top:502px;width:1.0px;height:299px;background:#ececec;"></div>
<div class="b" style="left:1607.2px;top:502px;width:1.0px;height:299px;background:#ececec;"></div>
<div class="b" style="left:1655.0px;top:502px;width:1.0px;height:299px;background:#ececec;"></div>
<div class="b" style="left:1702.8px;top:502px;width:1.0px;height:299px;background:#ececec;"></div>
<div class="b" style="left:1750.5px;top:502px;width:1.0px;height:299px;background:#ececec;"></div>
<div class="b" style="left:1798.3px;top:502px;width:1.0px;height:299px;background:#ececec;"></div>
<div class="b" style="left:747.3px;top:442px;width:1.0px;height:59px;background:#e9e9e9;"></div>
<div class="b" style="left:795.0px;top:442px;width:1.0px;height:59px;background:#e9e9e9;"></div>
<div class="b" style="left:842.8px;top:442px;width:1.0px;height:59px;background:#e9e9e9;"></div>
<div class="b" style="left:890.6px;top:442px;width:1.0px;height:59px;background:#e9e9e9;"></div>
<div class="b" style="left:938.4px;top:442px;width:1.0px;height:59px;background:#e9e9e9;"></div>
<div class="b" style="left:986.1px;top:442px;width:1.0px;height:59px;background:#e9e9e9;"></div>
<div class="b" style="left:1033.9px;top:442px;width:1.0px;height:59px;background:#e9e9e9;"></div>
<div class="b" style="left:1081.7px;top:442px;width:1.0px;height:59px;background:#e9e9e9;"></div>
<div class="b" style="left:1129.5px;top:442px;width:1.0px;height:59px;background:#e9e9e9;"></div>
<div class="b" style="left:1177.2px;top:442px;width:1.0px;height:59px;background:#e9e9e9;"></div>
<div class="b" style="left:1225.0px;top:442px;width:1.0px;height:59px;background:#e9e9e9;"></div>
<div class="b" style="left:1272.8px;top:442px;width:1.0px;height:59px;background:#e9e9e9;"></div>
<div class="b" style="left:1320.6px;top:442px;width:1.0px;height:59px;background:#e9e9e9;"></div>
<div class="b" style="left:1368.3px;top:442px;width:1.0px;height:59px;background:#e9e9e9;"></div>
<div class="b" style="left:1416.1px;top:442px;width:1.0px;height:59px;background:#e9e9e9;"></div>
<div class="b" style="left:1463.9px;top:442px;width:1.0px;height:59px;background:#e9e9e9;"></div>
<div class="b" style="left:1511.7px;top:442px;width:1.0px;height:59px;background:#e9e9e9;"></div>
<div class="b" style="left:1559.4px;top:442px;width:1.0px;height:59px;background:#e9e9e9;"></div>
<div class="b" style="left:1607.2px;top:442px;width:1.0px;height:59px;background:#e9e9e9;"></div>
<div class="b" style="left:1655.0px;top:442px;width:1.0px;height:59px;background:#e9e9e9;"></div>
<div class="b" style="left:1702.8px;top:442px;width:1.0px;height:59px;background:#e9e9e9;"></div>
<div class="b" style="left:1750.5px;top:442px;width:1.0px;height:59px;background:#e9e9e9;"></div>
<div class="b" style="left:1798.3px;top:442px;width:1.0px;height:59px;background:#e9e9e9;"></div>
<div class="b" style="left:1560px;top:501.8px;width:248px;height:53.99999999999994px;background:repeating-linear-gradient(45deg,rgba(0,0,0,0.095) 0px,rgba(0,0,0,0.095) 1.87px,rgba(255,255,255,0) 1.87px,rgba(255,255,255,0) 7.87px,rgba(0,0,0,0.095) 7.87px,rgba(0,0,0,0.095) 11.8px);"></div>
<div class="b" style="left:1560px;top:561.55px;width:248px;height:54.0px;background:repeating-linear-gradient(45deg,rgba(0,0,0,0.095) 0px,rgba(0,0,0,0.095) 1.87px,rgba(255,255,255,0) 1.87px,rgba(255,255,255,0) 7.87px,rgba(0,0,0,0.095) 7.87px,rgba(0,0,0,0.095) 11.8px);"></div>
<div class="b" style="left:1560px;top:681.05px;width:248px;height:54.0px;background:repeating-linear-gradient(45deg,rgba(0,0,0,0.095) 0px,rgba(0,0,0,0.095) 1.87px,rgba(255,255,255,0) 1.87px,rgba(255,255,255,0) 7.87px,rgba(0,0,0,0.095) 7.87px,rgba(0,0,0,0.095) 11.8px);"></div>
<div class="b" style="left:1560px;top:740.8px;width:248px;height:54.0px;background:repeating-linear-gradient(45deg,rgba(0,0,0,0.095) 0px,rgba(0,0,0,0.095) 1.87px,rgba(255,255,255,0) 1.87px,rgba(255,255,255,0) 7.87px,rgba(0,0,0,0.095) 7.87px,rgba(0,0,0,0.095) 11.8px);"></div>
<div class="b" style="left:700px;top:621px;width:1108px;height:54px;background:repeating-linear-gradient(45deg,#fff 0px,#fff 4.7px,#abc7e2 4.7px,#abc7e2 10.1px,#fff 10.1px,#fff 11.9px);"></div>
<div class="b" style="left:700px;top:621px;width:79px;height:20px;background:rgba(255,255,255,0.85);"></div>
<svg class="b" style="left:701px;top:629px;" width="8" height="11" viewBox="0 0 8 11" fill="none" stroke-linecap="round" stroke-linejoin="round"><path d="M7 0.5 L7 10.5 L1 5.5 Z" fill="#555" stroke="none"/></svg>
<div class="t" style="left:711.41px;top:622.93px;font-size:15.5px;line-height:19px;font-weight:700;color:#4272aa;letter-spacing:0.55px;">Afwezig</div>
<div class="b" style="left:700px;top:527.9px;width:856px;height:2.0px;background:#2c5d98;"></div>
<div class="b" style="left:700.0px;top:502.10px;width:39.7px;height:53.5px;background:#2e6ab4;border-left:4px solid #8f8f8f;overflow:hidden;"><div class="t" style="left:3px;top:16.5px;font-size:16px;line-height:20px;color:#fff;letter-spacing:0.6px">Meyer</div></div>
<div class="b" style="left:741.3px;top:502.10px;width:31.3px;height:53.5px;background:#2e6ab4;border-left:4px solid #8f8f8f;overflow:hidden;"><div class="t" style="left:3px;top:16.5px;font-size:16px;line-height:20px;color:#fff;letter-spacing:0.6px">Bauer</div></div>
<div class="b" style="left:777.2px;top:502.10px;width:47.0px;height:53.5px;background:#2e6ab4;border-left:4px solid #8f8f8f;overflow:hidden;"><div class="t" style="left:3px;top:16.5px;font-size:16px;line-height:20px;color:#fff;letter-spacing:0.6px">Schulz</div></div>
<div class="b" style="left:826.2px;top:502.10px;width:14.6px;height:53.5px;background:#2e6ab4;border-left:4px solid #8f8f8f;overflow:hidden;"><div class="t" style="left:3px;top:16.5px;font-size:16px;line-height:20px;color:#fff;letter-spacing:0.6px">Becker</div></div>
<div class="b" style="left:853.3px;top:502.10px;width:47.6px;height:53.5px;background:#2e6ab4;border-left:4px solid #8f8f8f;overflow:hidden;"><div class="t" style="left:3px;top:16.5px;font-size:16px;line-height:20px;color:#fff;letter-spacing:0.6px">Hofmann</div></div>
<div class="b" style="left:907.5px;top:502.10px;width:47.4px;height:53.5px;background:#2e6ab4;border-left:4px solid #8f8f8f;overflow:hidden;"><div class="t" style="left:3px;top:16.5px;font-size:16px;line-height:20px;color:#fff;letter-spacing:0.6px">Schafer</div></div>
<div class="b" style="left:958.6px;top:502.10px;width:30.4px;height:53.5px;background:#2e6ab4;border-left:4px solid #8f8f8f;overflow:hidden;"><div class="t" style="left:3px;top:16.5px;font-size:16px;line-height:20px;color:#fff;letter-spacing:0.6px">Richter</div></div>
<div class="b" style="left:992.4px;top:502.10px;width:54.3px;height:53.5px;background:#2e6ab4;border-left:4px solid #8f8f8f;overflow:hidden;"><div class="t" style="left:3px;top:16.5px;font-size:16px;line-height:20px;color:#fff;letter-spacing:0.6px">Schmidt</div></div>
<div class="b" style="left:1052.0px;top:502.10px;width:47.0px;height:53.5px;background:#2e6ab4;border-left:4px solid #8f8f8f;overflow:hidden;"><div class="t" style="left:3px;top:16.5px;font-size:16px;line-height:20px;color:#fff;letter-spacing:0.6px">Schulz</div></div>
<div class="b" style="left:1107.0px;top:502.10px;width:54.0px;height:53.5px;background:#2e6ab4;border-left:4px solid #8f8f8f;overflow:hidden;"><div class="t" style="left:3px;top:16.5px;font-size:16px;line-height:20px;color:#fff;letter-spacing:0.6px">Becker</div></div>
<div class="b" style="left:1165.4px;top:502.10px;width:62.5px;height:53.5px;background:#2e6ab4;border-left:4px solid #8f8f8f;overflow:hidden;"><div class="t" style="left:3px;top:16.5px;font-size:16px;line-height:20px;color:#fff;letter-spacing:0.6px">Koch Elias</div></div>
<div class="b" style="left:1232.2px;top:502.10px;width:31.6px;height:53.5px;background:#2e6ab4;border-left:4px solid #8f8f8f;overflow:hidden;"><div class="t" style="left:3px;top:16.5px;font-size:16px;line-height:20px;color:#fff;letter-spacing:0.6px">Schmidt</div></div>
<div class="b" style="left:1265.4px;top:502.10px;width:55.6px;height:53.5px;background:#2e6ab4;border-left:4px solid #8f8f8f;overflow:hidden;"><div class="t" style="left:3px;top:16.5px;font-size:16px;line-height:20px;color:#fff;letter-spacing:0.6px">Schmidt</div></div>
<div class="b" style="left:1324.2px;top:502.10px;width:31.6px;height:53.5px;background:#2e6ab4;border-left:4px solid #8f8f8f;overflow:hidden;"><div class="t" style="left:3px;top:16.5px;font-size:16px;line-height:20px;color:#fff;letter-spacing:0.6px">Sarah</div></div>
<div class="b" style="left:1357.4px;top:502.10px;width:47.3px;height:53.5px;background:#2e6ab4;border-left:4px solid #8f8f8f;overflow:hidden;"><div class="t" style="left:3px;top:16.5px;font-size:16px;line-height:20px;color:#fff;letter-spacing:0.6px">Schafer</div></div>
<div class="b" style="left:1409.5px;top:502.10px;width:46.5px;height:53.5px;background:#2e6ab4;border-left:4px solid #8f8f8f;overflow:hidden;"><div class="t" style="left:3px;top:16.5px;font-size:16px;line-height:20px;color:#fff;letter-spacing:0.6px">Weber</div></div>
<div class="b" style="left:1460.0px;top:502.10px;width:39.5px;height:53.5px;background:#2e6ab4;border-left:4px solid #8f8f8f;overflow:hidden;"><div class="t" style="left:3px;top:16.5px;font-size:16px;line-height:20px;color:#fff;letter-spacing:0.6px">Klein</div></div>
<div class="b" style="left:1499.5px;top:502.10px;width:47.4px;height:53.5px;background:#2e6ab4;border-left:4px solid #8f8f8f;overflow:hidden;"><div class="t" style="left:3px;top:16.5px;font-size:16px;line-height:20px;color:#fff;letter-spacing:0.6px">Becker</div></div>
<div class="b" style="left:1551px;top:515px;width:28px;height:28px;background:#2e6ab4;border-radius:50%;"></div>
<svg class="b" style="left:1557px;top:521px;" width="16" height="16" viewBox="0 0 16 16" fill="none" stroke-linecap="round" stroke-linejoin="round"><rect x="1.5" y="1.5" width="13" height="13" stroke="#fff" stroke-width="1.4" stroke-linejoin="miter"/><path d="M6 12 L6 4.5 L9 4.5 C10.6 4.5 11.3 5.4 11.3 6.7 C11.3 8 10.6 8.9 9 8.9 L6 8.9" stroke="#fff" stroke-width="1.6" stroke-linecap="butt" stroke-linejoin="miter"/></svg>
<div class="b" style="left:700px;top:587.6499999999999px;width:860px;height:2.0px;background:#2c5d98;"></div>
<div class="b" style="left:701.6px;top:561.85px;width:32.2px;height:53.5px;background:#2e6ab4;border-left:4px solid #8f8f8f;overflow:hidden;"><div class="t" style="left:3px;top:16.5px;font-size:16px;line-height:20px;color:#fff;letter-spacing:0.6px">Müller</div></div>
<div class="b" style="left:735.1px;top:561.85px;width:31.9px;height:53.5px;background:#2e6ab4;border-left:4px solid #8f8f8f;overflow:hidden;"><div class="t" style="left:3px;top:16.5px;font-size:16px;line-height:20px;color:#fff;letter-spacing:0.6px">Schulz</div></div>
<div class="b" style="left:770.3px;top:561.85px;width:31.5px;height:53.5px;background:#2e6ab4;border-left:4px solid #8f8f8f;overflow:hidden;"><div class="t" style="left:3px;top:16.5px;font-size:16px;line-height:20px;color:#fff;letter-spacing:0.6px">Fischer</div></div>
<div class="b" style="left:805.9px;top:561.85px;width:30.8px;height:53.5px;background:#2e6ab4;border-left:4px solid #8f8f8f;overflow:hidden;"><div class="t" style="left:3px;top:16.5px;font-size:16px;line-height:20px;color:#fff;letter-spacing:0.6px">Hoffmann</div></div>
<div class="b" style="left:839.3px;top:561.85px;width:47.4px;height:53.5px;background:#2e6ab4;border-left:4px solid #8f8f8f;overflow:hidden;"><div class="t" style="left:3px;top:16.5px;font-size:16px;line-height:20px;color:#fff;letter-spacing:0.6px">Sanchez</div></div>
<div class="b" style="left:888.2px;top:561.85px;width:47.3px;height:53.5px;background:#2e6ab4;border-left:4px solid #8f8f8f;overflow:hidden;"><div class="t" style="left:3px;top:16.5px;font-size:16px;line-height:20px;color:#fff;letter-spacing:0.6px">Meyer</div></div>
<div class="b" style="left:939.5px;top:561.85px;width:54.2px;height:53.5px;background:#2e6ab4;border-left:4px solid #8f8f8f;overflow:hidden;"><div class="t" style="left:3px;top:16.5px;font-size:16px;line-height:20px;color:#fff;letter-spacing:0.6px">Wagner</div></div>
<div class="b" style="left:997.0px;top:561.85px;width:47.0px;height:53.5px;background:#2e6ab4;border-left:4px solid #8f8f8f;overflow:hidden;"><div class="t" style="left:3px;top:16.5px;font-size:16px;line-height:20px;color:#fff;letter-spacing:0.6px">Becker</div></div>
<div class="b" style="left:1050.3px;top:561.85px;width:47.3px;height:53.5px;background:#2e6ab4;border-left:4px solid #8f8f8f;overflow:hidden;"><div class="t" style="left:3px;top:16.5px;font-size:16px;line-height:20px;color:#fff;letter-spacing:0.6px">Schulz</div></div>
<div class="b" style="left:1103.3px;top:561.85px;width:31.4px;height:53.5px;background:#2e6ab4;border-left:4px solid #8f8f8f;overflow:hidden;"><div class="t" style="left:3px;top:16.5px;font-size:16px;line-height:20px;color:#fff;letter-spacing:0.6px">Schmidt</div></div>
<div class="b" style="left:1142.4px;top:561.85px;width:32.2px;height:53.5px;background:#2e6ab4;border-left:4px solid #8f8f8f;overflow:hidden;"><div class="t" style="left:3px;top:16.5px;font-size:16px;line-height:20px;color:#fff;letter-spacing:0.6px">Sarah</div></div>
<div class="b" style="left:1175.5px;top:561.85px;width:3.5px;height:53.5px;background:#2e6ab4;border-left:1px solid #8f8f8f;overflow:hidden;"><div class="t" style="left:3px;top:16.5px;font-size:16px;line-height:20px;color:#fff;letter-spacing:0.6px"></div></div>
<div class="b" style="left:1207.9px;top:561.85px;width:47.9px;height:53.5px;background:#2e6ab4;border-left:4px solid #8f8f8f;overflow:hidden;"><div class="t" style="left:3px;top:16.5px;font-size:16px;line-height:20px;color:#fff;letter-spacing:0.6px">Schafer</div></div>
<div class="b" style="left:1264.3px;top:561.85px;width:47.5px;height:53.5px;background:#2e6ab4;border-left:4px solid #8f8f8f;overflow:hidden;"><div class="t" style="left:3px;top:16.5px;font-size:16px;line-height:20px;color:#fff;letter-spacing:0.6px">Becker</div></div>
<div class="b" style="left:1323.4px;top:561.85px;width:46.6px;height:53.5px;background:#2e6ab4;border-left:4px solid #8f8f8f;overflow:hidden;"><div class="t" style="left:3px;top:16.5px;font-size:16px;line-height:20px;color:#fff;letter-spacing:0.6px">Martin</div></div>
<div class="b" style="left:1379.2px;top:561.85px;width:14.5px;height:53.5px;background:#2e6ab4;border-left:4px solid #8f8f8f;overflow:hidden;"><div class="t" style="left:3px;top:16.5px;font-size:16px;line-height:20px;color:#fff;letter-spacing:0.6px">Schulz</div></div>
<div class="b" style="left:1405.5px;top:561.85px;width:47.4px;height:53.5px;background:#2e6ab4;border-left:4px solid #8f8f8f;overflow:hidden;"><div class="t" style="left:3px;top:16.5px;font-size:16px;line-height:20px;color:#fff;letter-spacing:0.6px">Wagner</div></div>
<div class="b" style="left:1456.9px;top:561.85px;width:46.8px;height:53.5px;background:#2e6ab4;border-left:4px solid #8f8f8f;overflow:hidden;"><div class="t" style="left:3px;top:16.5px;font-size:16px;line-height:20px;color:#fff;letter-spacing:0.6px">Weber</div></div>
<div class="b" style="left:1510.0px;top:561.85px;width:40.8px;height:53.5px;background:#2e6ab4;border-left:4px solid #8f8f8f;overflow:hidden;"><div class="t" style="left:3px;top:16.5px;font-size:16px;line-height:20px;color:#fff;letter-spacing:0.6px">Weber</div></div>
<div class="b" style="left:1179px;top:561.8499999999999px;width:29px;height:53.5px;background:#dde7f3;"></div>
<svg class="b" style="left:1184px;top:579px;" width="18" height="20" viewBox="0 0 18 20" fill="none" stroke-linecap="round" stroke-linejoin="round"><path d="M3 6 L3 14.5 C3 16.5 4.5 18 6.5 18 L9.5 18 C11.5 18 13 16.5 13 14.5 L13 6 Z" stroke="#4b74a6" stroke-width="1.4"/><path d="M13 8.5 C16 8.5 16.5 10 16.5 11 C16.5 12.5 15.5 13.5 13 13.5" stroke="#4b74a6" stroke-width="1.4"/><path d="M6.5 4 L6.5 2 M9 4 L9 1.5" stroke="#4b74a6" stroke-width="1.2"/></svg>
<div class="b" style="left:1554px;top:575px;width:28px;height:28px;background:#2e6ab4;border-radius:50%;"></div>
<svg class="b" style="left:1560px;top:581px;" width="16" height="16" viewBox="0 0 16 16" fill="none" stroke-linecap="round" stroke-linejoin="round"><rect x="1.5" y="1.5" width="13" height="13" stroke="#fff" stroke-width="1.4" stroke-linejoin="miter"/><path d="M6 12 L6 4.5 L9 4.5 C10.6 4.5 11.3 5.4 11.3 6.7 C11.3 8 10.6 8.9 9 8.9 L6 8.9" stroke="#fff" stroke-width="1.6" stroke-linecap="butt" stroke-linejoin="miter"/></svg>
<div class="b" style="left:700px;top:707.1499999999999px;width:820px;height:2.0px;background:#2c5d98;"></div>
<div class="b" style="left:706.2px;top:681.35px;width:32.2px;height:53.5px;background:#2e6ab4;border-left:4px solid #8f8f8f;overflow:hidden;"><div class="t" style="left:3px;top:16.5px;font-size:16px;line-height:20px;color:#fff;letter-spacing:0.6px">Weber</div></div>
<div class="b" style="left:741.3px;top:681.35px;width:40.3px;height:53.5px;background:#2e6ab4;border-left:4px solid #8f8f8f;overflow:hidden;"><div class="t" style="left:3px;top:16.5px;font-size:16px;line-height:20px;color:#fff;letter-spacing:0.6px">Wolf</div></div>
<div class="b" style="left:788.0px;top:681.35px;width:47.1px;height:53.5px;background:#2e6ab4;border-left:4px solid #8f8f8f;overflow:hidden;"><div class="t" style="left:3px;top:16.5px;font-size:16px;line-height:20px;color:#fff;letter-spacing:0.6px">Schulz</div></div>
<div class="b" style="left:835.1px;top:681.35px;width:55.9px;height:53.5px;background:#2e6ab4;border-left:4px solid #8f8f8f;overflow:hidden;"><div class="t" style="left:3px;top:16.5px;font-size:16px;line-height:20px;color:#fff;letter-spacing:0.6px">Wagner</div></div>
<div class="b" style="left:894.3px;top:681.35px;width:55.3px;height:53.5px;background:#2e6ab4;border-left:4px solid #8f8f8f;overflow:hidden;"><div class="t" style="left:3px;top:16.5px;font-size:16px;line-height:20px;color:#fff;letter-spacing:0.6px">Weber</div></div>
<div class="b" style="left:951.6px;top:681.35px;width:47.1px;height:53.5px;background:#2e6ab4;border-left:4px solid #8f8f8f;overflow:hidden;"><div class="t" style="left:3px;top:16.5px;font-size:16px;line-height:20px;color:#fff;letter-spacing:0.6px">Schneider</div></div>
<div class="b" style="left:1001.6px;top:681.35px;width:15.1px;height:53.5px;background:#2e6ab4;border-left:4px solid #8f8f8f;overflow:hidden;"><div class="t" style="left:3px;top:16.5px;font-size:16px;line-height:20px;color:#fff;letter-spacing:0.6px">Schulz</div></div>
<div class="b" style="left:1020.7px;top:681.35px;width:30.9px;height:53.5px;background:#2e6ab4;border-left:4px solid #8f8f8f;overflow:hidden;"><div class="t" style="left:3px;top:16.5px;font-size:16px;line-height:20px;color:#fff;letter-spacing:0.6px">Sarah</div></div>
<div class="b" style="left:1055.5px;top:681.35px;width:47.4px;height:53.5px;background:#2e6ab4;border-left:4px solid #8f8f8f;overflow:hidden;"><div class="t" style="left:3px;top:16.5px;font-size:16px;line-height:20px;color:#fff;letter-spacing:0.6px">Schulz</div></div>
<div class="b" style="left:1107.1px;top:681.35px;width:14.9px;height:53.5px;background:#2e6ab4;border-left:4px solid #8f8f8f;overflow:hidden;"><div class="t" style="left:3px;top:16.5px;font-size:16px;line-height:20px;color:#fff;letter-spacing:0.6px">Meyer</div></div>
<div class="b" style="left:1126.2px;top:681.35px;width:54.3px;height:53.5px;background:#2e6ab4;border-left:4px solid #8f8f8f;overflow:hidden;"><div class="t" style="left:3px;top:16.5px;font-size:16px;line-height:20px;color:#fff;letter-spacing:0.6px">Hofmann</div></div>
<div class="b" style="left:1188.2px;top:681.35px;width:46.9px;height:53.5px;background:#2e6ab4;border-left:4px solid #8f8f8f;overflow:hidden;"><div class="t" style="left:3px;top:16.5px;font-size:16px;line-height:20px;color:#fff;letter-spacing:0.6px">Wagner</div></div>
<div class="b" style="left:1237.1px;top:681.35px;width:38.8px;height:53.5px;background:#2e6ab4;border-left:4px solid #8f8f8f;overflow:hidden;"><div class="t" style="left:3px;top:16.5px;font-size:16px;line-height:20px;color:#fff;letter-spacing:0.6px">Neumann</div></div>
<div class="b" style="left:1279.0px;top:681.35px;width:54.2px;height:53.5px;background:#2e6ab4;border-left:4px solid #8f8f8f;overflow:hidden;"><div class="t" style="left:3px;top:16.5px;font-size:16px;line-height:20px;color:#fff;letter-spacing:0.6px">Hofmann</div></div>
<div class="b" style="left:1337.3px;top:681.35px;width:15.3px;height:53.5px;background:#2e6ab4;border-left:4px solid #8f8f8f;overflow:hidden;"><div class="t" style="left:3px;top:16.5px;font-size:16px;line-height:20px;color:#fff;letter-spacing:0.6px">Schulz</div></div>
<div class="b" style="left:1367.3px;top:681.35px;width:40.1px;height:53.5px;background:#2e6ab4;border-left:4px solid #8f8f8f;overflow:hidden;"><div class="t" style="left:3px;top:16.5px;font-size:16px;line-height:20px;color:#fff;letter-spacing:0.6px">Schneider</div></div>
<div class="b" style="left:1409.0px;top:681.35px;width:47.4px;height:53.5px;background:#2e6ab4;border-left:4px solid #8f8f8f;overflow:hidden;"><div class="t" style="left:3px;top:16.5px;font-size:16px;line-height:20px;color:#fff;letter-spacing:0.6px">Schafer</div></div>
<div class="b" style="left:1461.3px;top:681.35px;width:47.7px;height:53.5px;background:#2e6ab4;border-left:4px solid #8f8f8f;overflow:hidden;"><div class="t" style="left:3px;top:16.5px;font-size:16px;line-height:20px;color:#fff;letter-spacing:0.6px">Becker</div></div>
<div class="b" style="left:1514.4px;top:694.3px;width:28.0px;height:28.0px;background:#2e6ab4;border-radius:50%;"></div>
<svg class="b" style="left:1520.4px;top:700.3px;" width="16" height="16" viewBox="0 0 16 16" fill="none" stroke-linecap="round" stroke-linejoin="round"><rect x="1.5" y="1.5" width="13" height="13" stroke="#fff" stroke-width="1.4" stroke-linejoin="miter"/><path d="M6 12 L6 4.5 L9 4.5 C10.6 4.5 11.3 5.4 11.3 6.7 C11.3 8 10.6 8.9 9 8.9 L6 8.9" stroke="#fff" stroke-width="1.6" stroke-linecap="butt" stroke-linejoin="miter"/></svg>
<div class="b" style="left:700px;top:766.8999999999999px;width:360px;height:2.0px;background:#2c5d98;"></div>
<div class="b" style="left:705.3px;top:741.10px;width:47.3px;height:53.5px;background:#2e6ab4;border-left:4px solid #8f8f8f;overflow:hidden;"><div class="t" style="left:3px;top:16.5px;font-size:16px;line-height:20px;color:#fff;letter-spacing:0.6px">Martin</div></div>
<div class="b" style="left:758.2px;top:741.10px;width:54.3px;height:53.5px;background:#2e6ab4;border-left:4px solid #8f8f8f;overflow:hidden;"><div class="t" style="left:3px;top:16.5px;font-size:16px;line-height:20px;color:#fff;letter-spacing:0.6px">Müller</div></div>
<div class="b" style="left:820.4px;top:741.10px;width:54.2px;height:53.5px;background:#2e6ab4;border-left:4px solid #8f8f8f;overflow:hidden;"><div class="t" style="left:3px;top:16.5px;font-size:16px;line-height:20px;color:#fff;letter-spacing:0.6px">Wagner</div></div>
<div class="b" style="left:878.3px;top:741.10px;width:47.4px;height:53.5px;background:#2e6ab4;border-left:4px solid #8f8f8f;overflow:hidden;"><div class="t" style="left:3px;top:16.5px;font-size:16px;line-height:20px;color:#fff;letter-spacing:0.6px">Becker</div></div>
<div class="b" style="left:935.1px;top:741.10px;width:30.3px;height:53.5px;background:#2e6ab4;border-left:4px solid #8f8f8f;overflow:hidden;"><div class="t" style="left:3px;top:16.5px;font-size:16px;line-height:20px;color:#fff;letter-spacing:0.6px">Schmidt</div></div>
<div class="b" style="left:973.3px;top:741.10px;width:30.6px;height:53.5px;background:#2e6ab4;border-left:4px solid #8f8f8f;overflow:hidden;"><div class="t" style="left:3px;top:16.5px;font-size:16px;line-height:20px;color:#fff;letter-spacing:0.6px">Hoffmann</div></div>
<div class="b" style="left:1006.6px;top:741.10px;width:47.4px;height:53.5px;background:#2e6ab4;border-left:4px solid #8f8f8f;overflow:hidden;"><div class="t" style="left:3px;top:16.5px;font-size:16px;line-height:20px;color:#fff;letter-spacing:0.6px">Fischer</div></div>
<div class="b" style="left:1054.5px;top:754.3px;width:28.0px;height:28.0px;background:#2e6ab4;border-radius:50%;"></div>
<svg class="b" style="left:1060.5px;top:760.3px;" width="16" height="16" viewBox="0 0 16 16" fill="none" stroke-linecap="round" stroke-linejoin="round"><rect x="1.5" y="1.5" width="13" height="13" stroke="#fff" stroke-width="1.4" stroke-linejoin="miter"/><path d="M6 12 L6 4.5 L9 4.5 C10.6 4.5 11.3 5.4 11.3 6.7 C11.3 8 10.6 8.9 9 8.9 L6 8.9" stroke="#fff" stroke-width="1.6" stroke-linecap="butt" stroke-linejoin="miter"/></svg>
</body></html>
